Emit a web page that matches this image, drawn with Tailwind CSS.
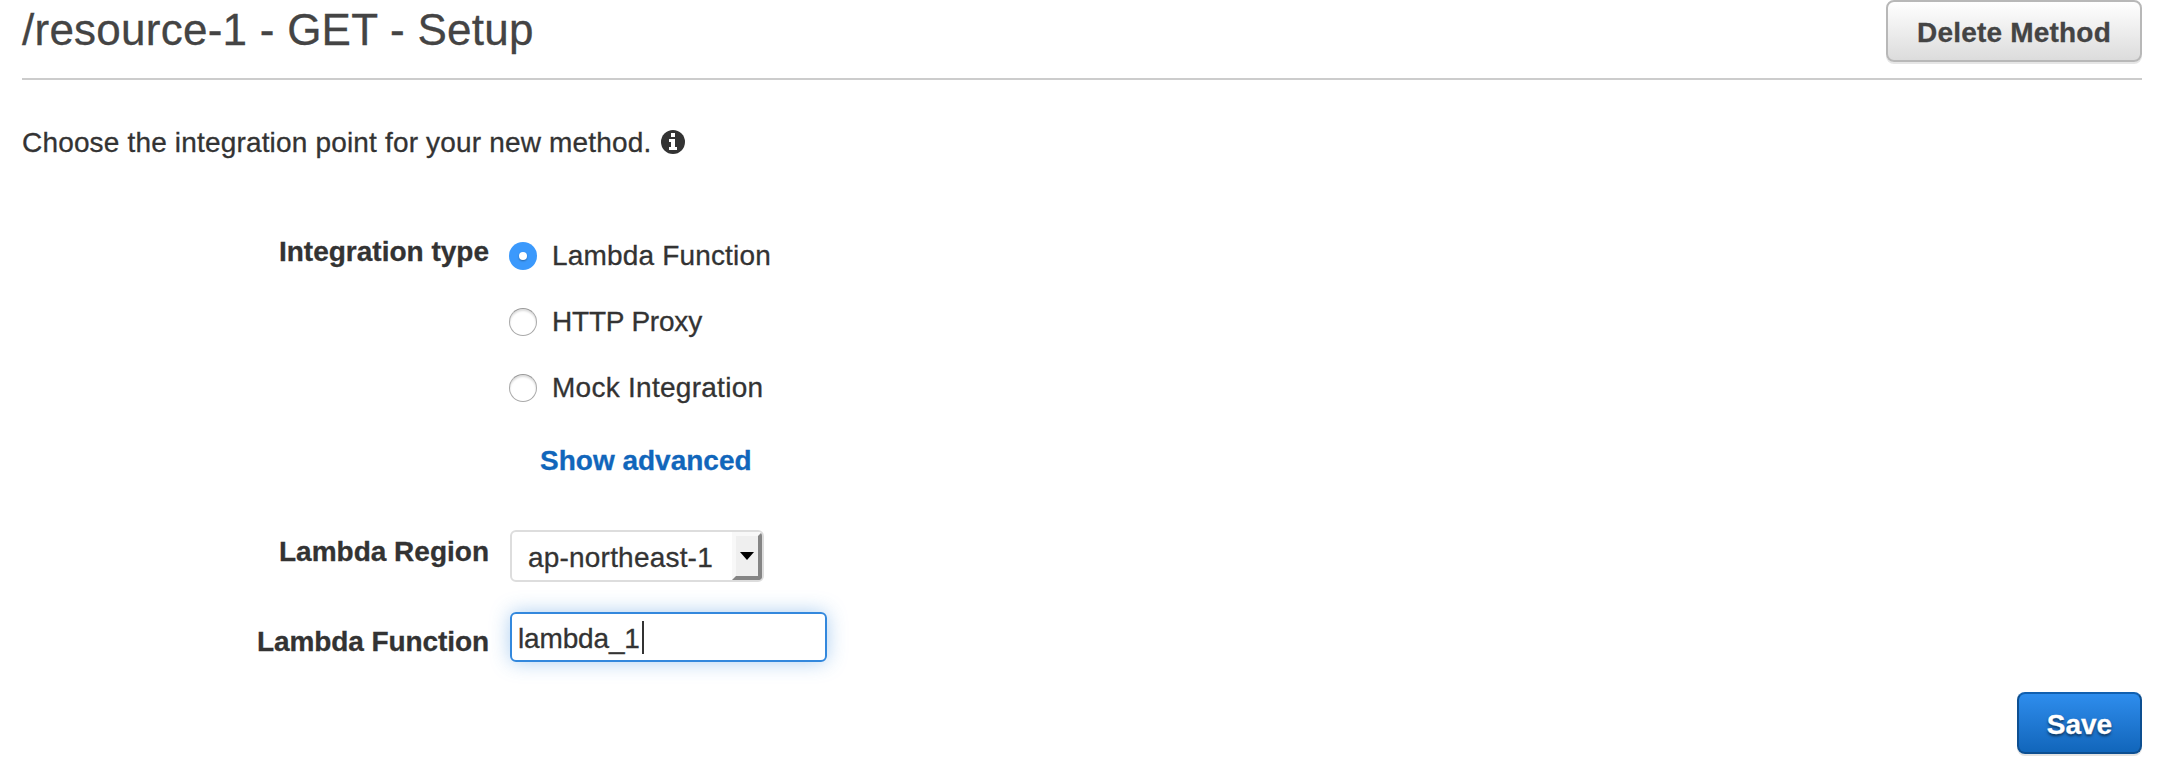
<!DOCTYPE html>
<html lang="en">
<head>
<meta charset="utf-8">
<title>Method Setup</title>
<script src="https://cdn.jsdelivr.net/npm/@tailwindcss/browser@4"></script>
</head>
<body class="h-[772px] overflow-hidden bg-white pl-[22px] pr-4 font-['Liberation_Sans',Arial,sans-serif] text-[28px] leading-8 text-[#333] [-webkit-text-stroke:0.3px]">
  <header class="flex h-20 items-start justify-between border-b-2 border-[#ccc]">
    <h1 class="pt-[5px] text-[44px] leading-[50px] tracking-[0.25px] text-[#444]">/resource-1 - GET - Setup</h1>
    <button class="flex h-[62px] w-64 justify-center rounded-lg border-2 border-[#b8b8b8] bg-linear-to-b from-white to-[#dcdcdc] pt-[15px] font-bold tracking-[0.2px] text-[#444] shadow-[0_2px_0_#e6e6e6]">Delete Method</button>
  </header>
  <main>
    <p class="mt-[47px] flex h-8 items-start gap-2.5">
      <span class="tracking-[0.17px]">Choose the integration point for your new method.</span>
      <svg class="mt-[3px] size-6" viewBox="0 0 24 24"><circle cx="12" cy="12" r="12" fill="#333"/><path fill="#fff" d="M10 3h4v4h-4zM8 9h6v8h2v3H8v-3h2v-5H8z"/></svg>
    </p>
    <form class="mt-[76px] grid grid-cols-[467px_1fr] gap-x-[21px]">
      <div class="pt-px text-right font-bold">Integration type</div>
      <div class="flex h-[295px] flex-col">
        <div class="flex h-[66px] items-start pt-[5px] tracking-[0.17px]"><span class="mt-0.5 mr-[15px] ml-[-1px] flex size-7 items-center justify-center rounded-full bg-[#3b99fc]"><i class="size-2 rounded-full bg-white shadow-[0_1px_2px_#0005]"></i></span>Lambda Function</div>
        <div class="flex h-[66px] items-start pt-[5px] tracking-[-0.2px]"><span class="mt-0.5 mr-[15px] ml-[-1px] size-7 rounded-full border border-[#aaa] border-t-[#999] shadow-[inset_0_2px_2px_#0002]"></span>HTTP Proxy</div>
        <div class="flex h-[66px] items-start pt-[5px] tracking-[0.27px]"><span class="mt-0.5 mr-[15px] ml-[-1px] size-7 rounded-full border border-[#aaa] border-t-[#999] shadow-[inset_0_2px_2px_#0002]"></span>Mock Integration</div>
        <a class="mt-3 ml-[30px] font-bold text-[#1166bb]">Show advanced</a>
      </div>
      <div class="h-[82px] pt-1.5 text-right font-bold">Lambda Region</div>
      <div>
        <div class="flex h-[52px] w-[254px] justify-between rounded-md border-2 border-[#ddd]">
          <span class="pt-2.5 pl-4 tracking-[0.2px]">ap-northeast-1</span>
          <span class="flex h-12 w-[30px] items-center justify-center rounded-r border-4 border-t-[#f8f8f8] border-r-[#858585] border-b-[#858585] border-l-[#f8f8f8] bg-[#efefef]"><svg class="h-2 w-3.5 shrink-0" viewBox="0 0 14 8"><path d="M0 0h14L7 8z"/></svg></span>
        </div>
      </div>
      <div class="pt-3.5 text-right font-bold tracking-[-0.08px]">Lambda Function</div>
      <div class="flex h-[50px] w-[317px] rounded-md border-2 border-[#3388dd] pt-[9px] pl-1.5 shadow-[0_0_20px_#3388dd66]">
        <span class="tracking-[-0.15px]">lambda_1</span><i class="mt-[-2px] ml-0.5 h-[33px] w-0.5 bg-[#333]"></i>
      </div>
    </form>
    <div class="mt-[30px] flex justify-end">
      <button class="flex h-[62px] w-[125px] justify-center rounded-lg border-2 border-[#0d4f91] border-t-[#1160b0] bg-linear-to-b from-[#2e8ded] to-[#1166bb] pt-[15px] font-bold text-white shadow-[0_2px_0_#e3e3e3] [text-shadow:0_2px_3px_#0009]">Save</button>
    </div>
  </main>
</body>
</html>
